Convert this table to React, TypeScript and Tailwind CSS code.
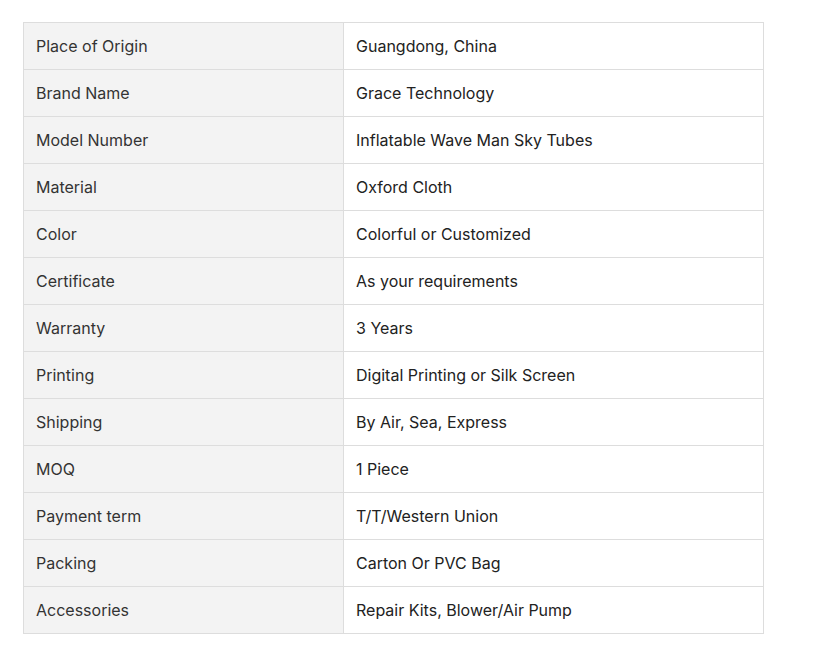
import React from "react";

const rows: [string, string][] = [
  ["Place of Origin", "Guangdong, China"],
  ["Brand Name", "Grace Technology"],
  ["Model Number", "Inflatable Wave Man Sky Tubes"],
  ["Material", "Oxford Cloth"],
  ["Color", "Colorful or Customized"],
  ["Certificate", "As your requirements"],
  ["Warranty", "3 Years"],
  ["Printing", "Digital Printing or Silk Screen"],
  ["Shipping", "By Air, Sea, Express"],
  ["MOQ", "1 Piece"],
  ["Payment term", "T/T/Western Union"],
  ["Packing", "Carton Or PVC Bag"],
  ["Accessories", "Repair Kits, Blower/Air Pump"],
];

export default function App() {
  return (
    <div className="w-[835px] h-[652px] bg-white pt-[22px] pl-[23px]" style={{ fontFamily: "Inter, 'Noto Sans', sans-serif" }}>
      <div className="w-[741px] border-l border-t border-[#dddddd] text-[16px] text-[#333333]">
        {rows.map(([k, v]) => (
          <div key={k} className="flex h-[47px] border-b border-[#dddddd]">
            <div className="w-[320px] shrink-0 bg-[#f3f3f3] border-r border-[#dddddd] flex items-center pl-[12px]">
              {k}
            </div>
            <div className="w-[420px] shrink-0 border-r border-[#dddddd] flex items-center pl-[12px] text-[#222222]">
              {v}
            </div>
          </div>
        ))}
      </div>
    </div>
  );
}
